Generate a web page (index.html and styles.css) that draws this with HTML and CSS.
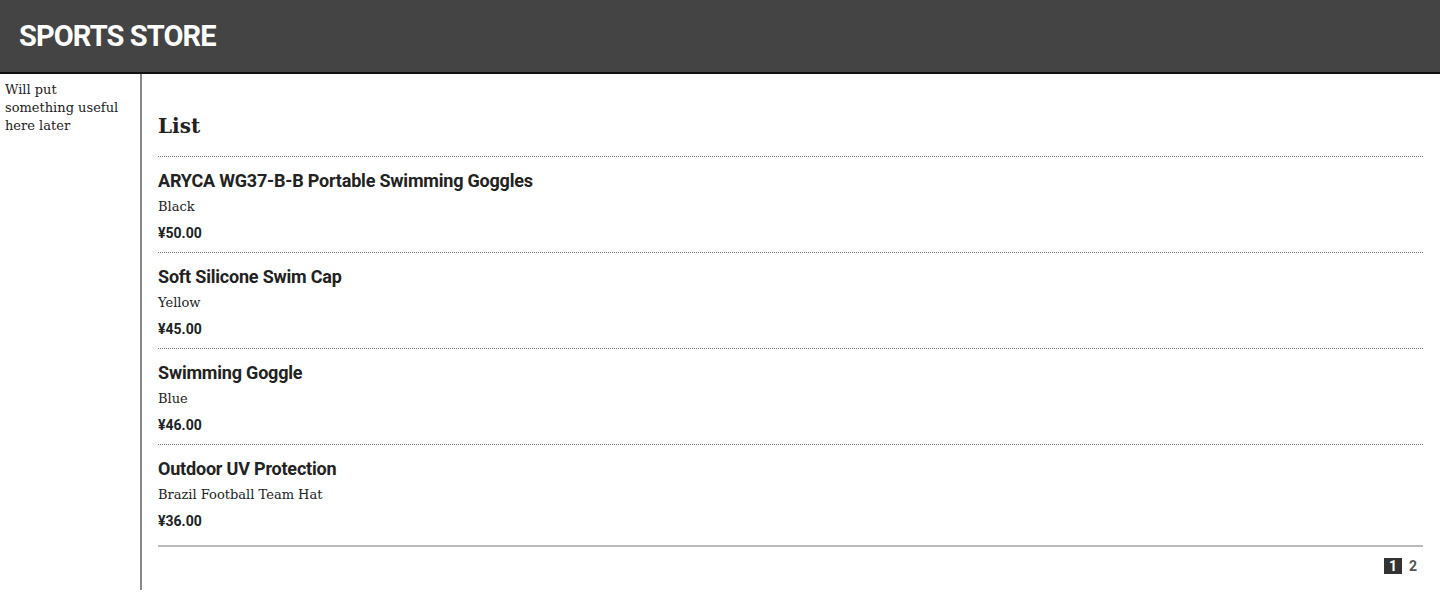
FILE: index.html
```html
<!DOCTYPE html>
<html>
<head>
<meta charset="utf-8">
<title>SportsStore</title>
<link rel="stylesheet" href="styles.css">
</head>
<body>
<div class="header">
  <div class="title">SPORTS STORE</div>
</div>
<div class="main">
  <div class="categories">Will put something useful here later</div>
  <div class="content">
    <h2 class="list-title">List</h2>
    <div class="item">
      <h3>ARYCA WG37-B-B Portable Swimming Goggles</h3>
      <div class="desc">Black</div>
      <h4>¥50.00</h4>
    </div>
    <div class="item">
      <h3>Soft Silicone Swim Cap</h3>
      <div class="desc">Yellow</div>
      <h4>¥45.00</h4>
    </div>
    <div class="item">
      <h3>Swimming Goggle</h3>
      <div class="desc">Blue</div>
      <h4>¥46.00</h4>
    </div>
    <div class="item last">
      <h3>Outdoor UV Protection</h3>
      <div class="desc">Brazil Football Team Hat</div>
      <h4>¥36.00</h4>
    </div>
    <div class="pager">
      <a class="page selected">1</a>
      <a class="page">2</a>
    </div>
  </div>
</div>
</body>
</html>
```
FILE: styles.css
```css
html, body {
  margin: 0;
  padding: 0;
  background: #fff;
}
body {
  font-family: "DejaVu Serif", Georgia, serif;
  font-size: 13px;
  color: #222;
}
.header {
  height: 72px;
  background: #444;
  border-bottom: 2px solid #111;
  display: flex;
  align-items: center;
  padding-left: 19px;
}
.title {
  color: #fff;
  font-family: Roboto, "Liberation Sans", Arial, sans-serif;
  font-weight: bold;
  font-size: 29px;
  letter-spacing: -0.9px;
}
.main {
  display: flex;
}
.categories {
  width: 118px;
  padding: 7px 17px 0 5px;
  border-right: 2px solid #888;
  line-height: 18px;
  min-height: 509px;
}
.content {
  flex: 1;
  padding: 0 17px 0 16px;
}
.list-title {
  font-size: 20px;
  font-weight: bold;
  margin: 40px 0 0 0;
  height: 42px;
  border-bottom: 1px dotted #777;
}
.item {
  height: 95px;
  border-bottom: 1px dotted #777;
}
.item.last {
  border-bottom: none;
  height: 100px;
}
.item h3 {
  font-family: Roboto, "Liberation Sans", Arial, sans-serif;
  font-size: 18px;
  font-weight: bold;
  letter-spacing: -0.2px;
  margin: 0;
  padding-top: 14px;
  line-height: 20px;
}
.desc {
  margin-top: 7px;
  line-height: 18px;
}
.item h4 {
  font-family: Roboto, "Liberation Sans", Arial, sans-serif;
  font-size: 14px;
  font-weight: bold;
  margin: 8px 0 0 0;
  line-height: 18px;
}
.pager {
  border-top: 2px solid #bbb;
  display: flex;
  justify-content: flex-end;
  gap: 2px;
  padding-top: 11px;
  padding-right: 1px;
}
.page {
  font-family: Roboto, "Liberation Sans", Arial, sans-serif;
  font-weight: bold;
  font-size: 14px;
  color: #555;
  padding: 0 5px;
  line-height: 16px;
}
.page.selected {
  background: #333;
  color: #fff;
}
```
